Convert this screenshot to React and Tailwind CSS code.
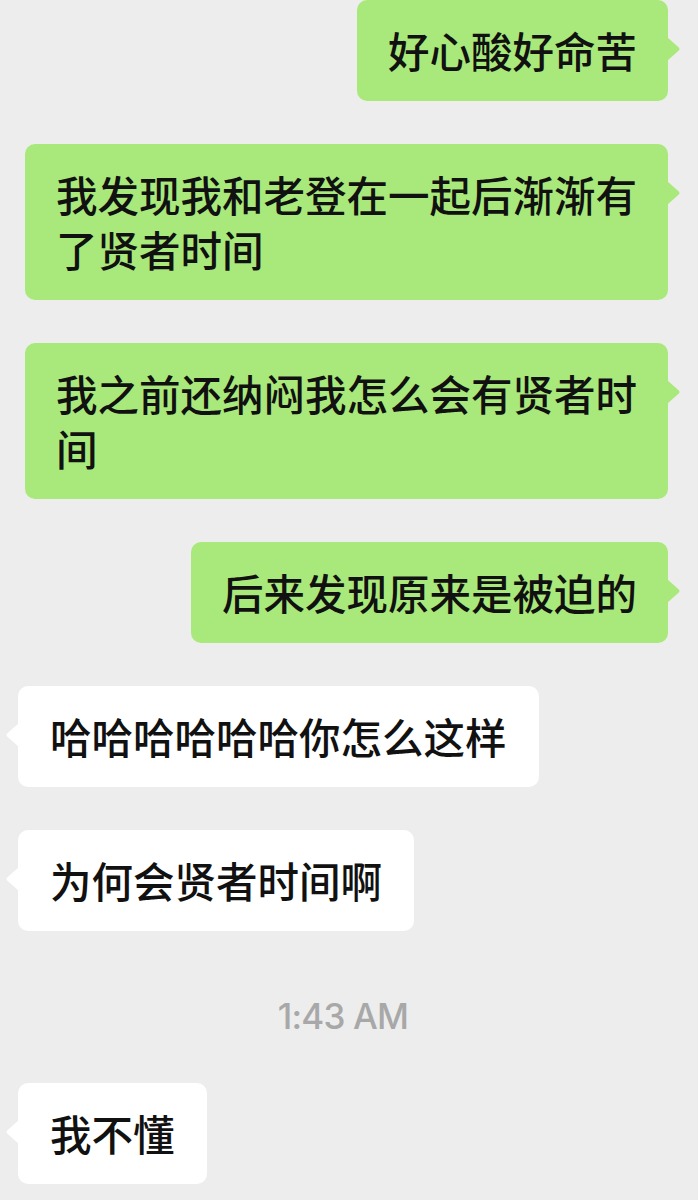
const cjk = { fontFamily: '"Noto Sans CJK SC", "Noto Sans", sans-serif' };

function Tail({ side, color }) {
  // little pointer on the bubble edge, aimed at the first line
  if (side === "right") {
    return (
      <svg className="absolute top-[37px] right-[-13px]" width="14" height="24" viewBox="0 0 14 24">
        <path d="M0 0 L11.5 10.2 Q13.5 12 11.5 13.8 L0 24 Z" fill={color} />
      </svg>
    );
  }
  return (
    <svg className="absolute top-[37px] left-[-13px]" width="14" height="24" viewBox="0 0 14 24">
      <path d="M14 0 L2.5 10.2 Q0.5 12 2.5 13.8 L14 24 Z" fill={color} />
    </svg>
  );
}

function Mine({ children }) {
  return (
    <div className="flex justify-end pr-[30px]">
      <div className="relative max-w-[643px] rounded-[10px] bg-[#a9e97b] px-[31px] py-[23px]">
        <p className="text-[41.5px] font-medium leading-[55px] text-[#111]" style={cjk}>
          {children}
        </p>
        <Tail side="right" color="#a9e97b" />
      </div>
    </div>
  );
}

function Theirs({ children }) {
  return (
    <div className="flex justify-start pl-[18px]">
      <div className="relative max-w-[643px] rounded-[10px] bg-white px-[32px] py-[23px]">
        <p className="text-[41.5px] font-medium leading-[55px] text-[#111]" style={cjk}>
          {children}
        </p>
        <Tail side="left" color="#ffffff" />
      </div>
    </div>
  );
}

export default function App() {
  return (
    <div className="h-[1200px] w-full overflow-hidden bg-[#ededed] flex flex-col gap-[43px]">
      <Mine>好心酸好命苦</Mine>
      <Mine>我发现我和老登在一起后渐渐有了贤者时间</Mine>
      <Mine>我之前还纳闷我怎么会有贤者时间</Mine>
      <Mine>后来发现原来是被迫的</Mine>
      <Theirs>哈哈哈哈哈哈你怎么这样</Theirs>
      <Theirs>为何会贤者时间啊</Theirs>
      <div
        className="mt-[22px] mb-[4px] h-[40px] pr-[12px] text-center text-[35px] font-medium leading-[40px] tracking-[-0.8px] text-[#a8a8a8]"
        style={{ fontFamily: 'Inter, "Liberation Sans", sans-serif' }}
      >
        1:43 AM
      </div>
      <Theirs>我不懂</Theirs>
    </div>
  );
}
